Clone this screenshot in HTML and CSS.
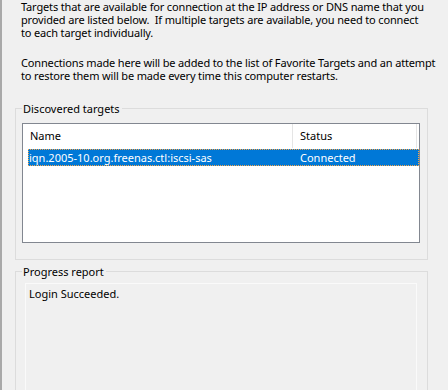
FILE: index.html
```html
<!DOCTYPE html>
<html lang="en">
<head>
    <meta charset="UTF-8">
    <title>Discovered targets</title>
    <link rel="stylesheet" href="styles.css">
</head>
<body>

<div class="page">
    <p class="intro">Targets that are available for connection at the IP address or DNS name that you<br>provided are listed below.&nbsp; If multiple targets are available, you need to connect<br>to each target individually.</p>
    <p class="intro second">Connections made here will be added to the list of Favorite Targets and an attempt<br>to restore them will be made every time this computer restarts.</p>

    <div class="group discovered">
        <span class="group-title">Discovered targets</span>
        <div class="listview">
            <div class="lv-header">
                <div class="col col-name">Name</div>
                <div class="col col-status">Status</div>
                <div class="col col-fill"></div>
            </div>
            <div class="lv-row selected">
                <div class="cell cell-name">iqn.2005-10.org.freenas.ctl:iscsi-sas</div>
                <div class="cell cell-status">Connected</div>
            </div>
        </div>
    </div>

    <div class="group progress">
        <span class="group-title">Progress report</span>
        <div class="report">Login Succeeded.</div>
    </div>
</div>

</body>
</html>
```

FILE: styles.css
```css
body {
    margin: 0;
    background-color: #f0f0f0;
    font-family: "Noto Sans", "Open Sans", sans-serif;
    font-size: 11px;
    color: #000;
    height: 390px;
    overflow: hidden;
}
.page {
    border-left: 2px solid #a9a9a9;
    height: 100%;
    padding-left: 13px;
    width: 413px;
}
.intro {
    margin: 0;
    padding-left: 6px;
    line-height: 13px;
    white-space: nowrap;
    letter-spacing: -0.15px;
}
.intro.second {
    margin-top: 17px;
}

/* group boxes */
.group {
    border: 1px solid #dcdcdc;
    margin-top: 26px;
    box-sizing: border-box;
}
.group-title {
    display: block;
    width: fit-content;
    height: 15px;
    margin: -8px 0 0 6px;
    padding: 0 2px 0 1px;
    line-height: 15px;
    background-color: #f0f0f0;
}
.discovered {
    height: 152px;
}
.progress {
    margin-top: 11px;
    height: 200px;
}

/* list view */
.listview {
    margin: 7px 7px 0 6px;
    height: 120px;
    box-sizing: border-box;
    border: 1px solid #828790;
    background-color: #fff;
}
.lv-header {
    display: flex;
    height: 24px;
    line-height: 24px;
}
.col {
    padding-left: 7px;
}
.col-name {
    width: 262px;
    border-right: 1px solid #e5e5e5;
}
.col-status {
    width: 116px;
    border-right: 1px solid #e5e5e5;
}
.col-fill {
    flex: 1;
    padding: 0;
}
.lv-row {
    display: flex;
    height: 17px;
    box-sizing: border-box;
    line-height: 15px;
    margin: 1px 0 0 5px;
}
.lv-row.selected {
    background-color: #0078d7;
    color: #fff;
    border: 1px dotted #f7a64a;
}
.cell-name {
    width: 271px;
}
.cell-status {
    flex: 1;
}

/* progress text box */
.report {
    margin: 4px 10px 0 9px;
    height: 180px;
    border: 1px solid #fafafa;
    padding: 2px 3px;
    line-height: 15px;
}
```
